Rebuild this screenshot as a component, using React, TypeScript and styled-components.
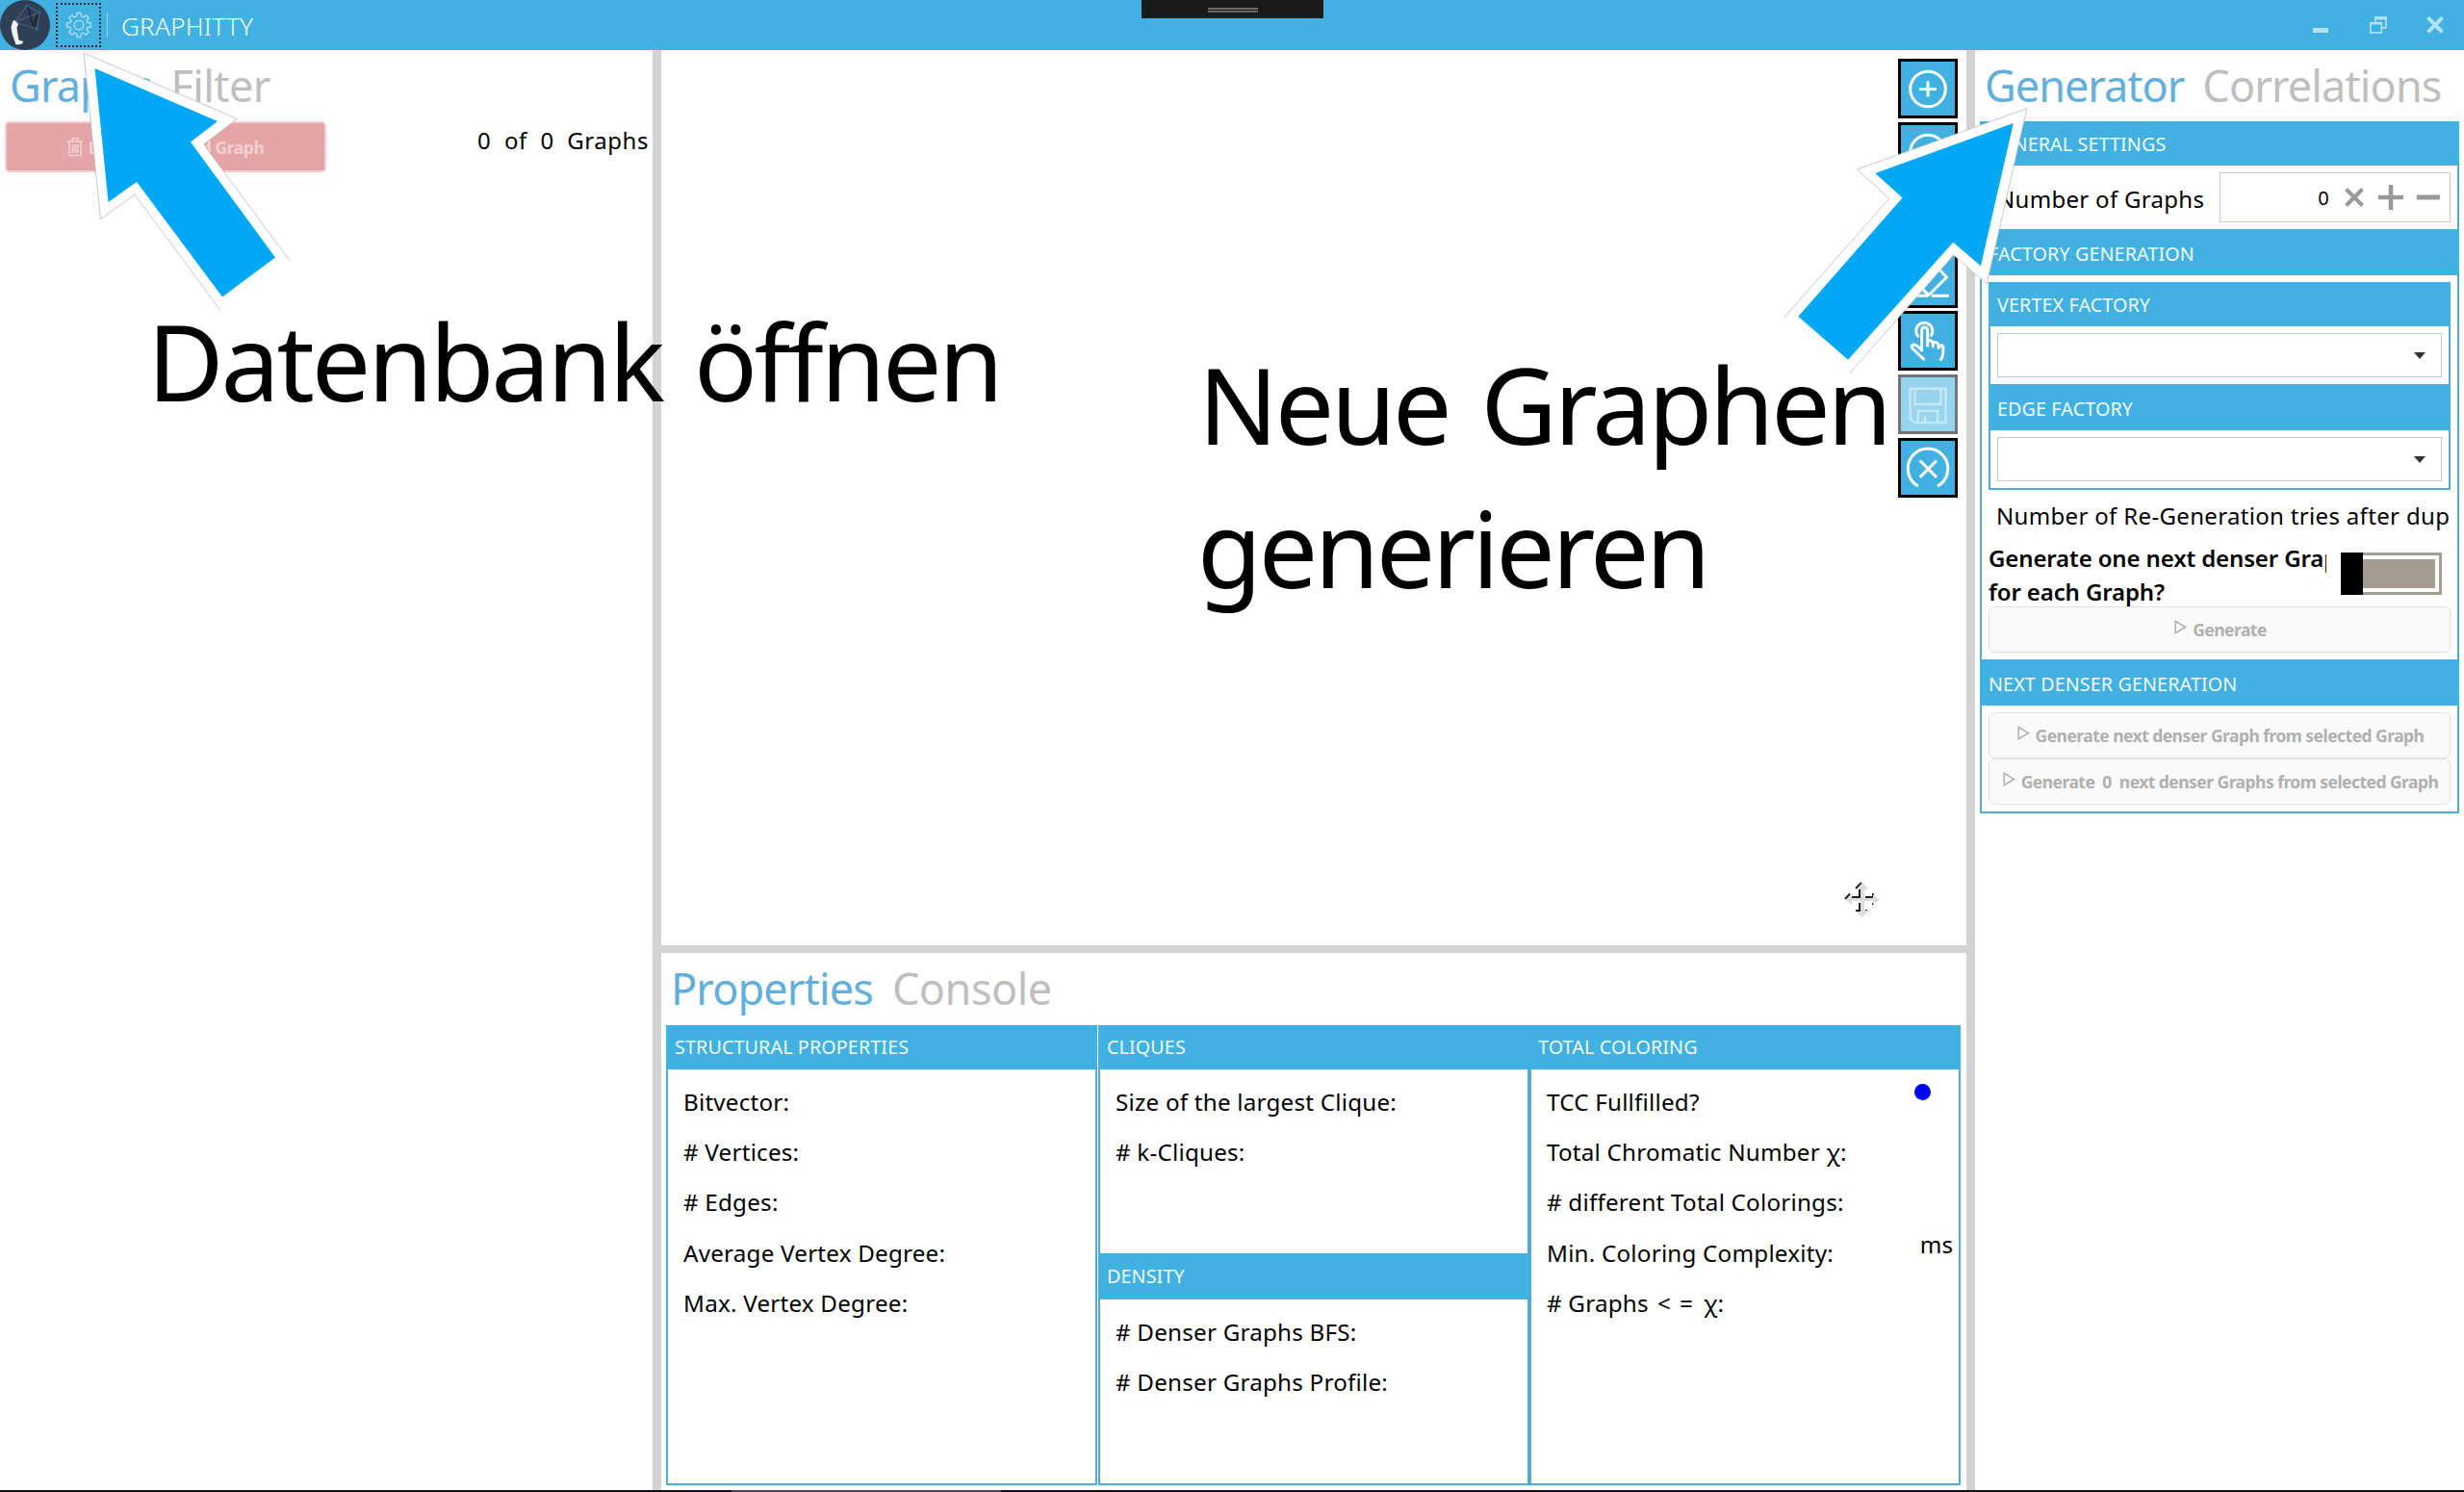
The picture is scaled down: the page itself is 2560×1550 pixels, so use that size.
import React from "react";
import styled, { createGlobalStyle } from "styled-components";

const BLUE = "#41b1e1";
const LINE = "#52abd0";

const Global = createGlobalStyle`
  * { box-sizing: border-box; }
  body {
    margin: 0;
    background: #fff;
    color: #000;
    font-family: "Noto Sans", "Open Sans", sans-serif;
  }
`;

const Window = styled.div`
  position: relative;
  width: 2560px;
  height: 1550px;
  display: flex;
  flex-direction: column;
  overflow: hidden;
  background: #fff;
`;

/* ---------- title bar ---------- */

const TitleBar = styled.header`
  height: 52px;
  flex: none;
  display: flex;
  align-items: center;
  background: ${BLUE};
  padding-right: 21px;
`;

const SettingsButton = styled.div`
  width: 47px;
  height: 46px;
  margin-left: 6px;
  border: 2px dotted #0d2a38;
  display: flex;
  align-items: center;
  justify-content: center;
`;

const Divider = styled.div`
  width: 1px;
  height: 26px;
  margin-left: 6px;
  background: #8fd2ee;
`;

const AppName = styled.div`
  flex: 1;
  margin-left: 14px;
  font-size: 26px;
  line-height: 52px;
  padding-top: 1px;
  font-weight: 300;
  letter-spacing: 0.3px;
  color: #f4fbfe;
`;

const WindowButtons = styled.div`
  display: flex;
  gap: 41px;
`;

const Notch = styled.div`
  position: absolute;
  left: 1186px;
  top: 0;
  width: 189px;
  height: 19px;
  background: #1a1a1a;
  display: flex;
  flex-direction: column;
  align-items: center;
  gap: 1px;
  padding-top: 8px;
`;

const NotchBar = styled.div`
  width: 52px;
  height: 2px;
  background: #6a6a6a;
`;

/* ---------- main layout ---------- */

const Body = styled.main`
  flex: 1;
  min-height: 0;
  display: grid;
  grid-template-columns: 678px 9px 1356px 9px 508px;
`;

const Splitter = styled.div`
  background: #d3d3d3;
`;

const Column = styled.section`
  min-width: 0;
  display: flex;
  flex-direction: column;
`;

const BottomEdge = styled.div`
  height: 2px;
  flex: none;
  background: linear-gradient(90deg, #101014 760px, #4a4a4c 760px, #4a4a4c 1040px, #101014 1040px);
`;

const Tabs = styled.nav<{ $indent: number; $gap?: number }>`
  display: flex;
  gap: ${(p) => p.$gap ?? 19}px;
  height: 74px;
  flex: none;
  padding-left: ${(p) => p.$indent}px;
`;

const Tab = styled.span<{ $active?: boolean; $ls?: number }>`
  font-size: 45px;
  line-height: 73px;
  letter-spacing: ${(p) => p.$ls ?? -0.87}px;
  white-space: nowrap;
  color: ${(p) => (p.$active ? "#63afdc" : "#bfbfbf")};
`;

/* ---------- left column ---------- */

const GraphRow = styled.div`
  display: flex;
  justify-content: space-between;
  padding: 0 4px 0 5px;
`;

const DeleteButton = styled.div`
  width: 334px;
  height: 53px;
  display: flex;
  align-items: center;
  justify-content: center;
  gap: 6px;
  border: 2px solid #efcfd1;
  border-radius: 5px;
  background: #e4a5a7;
  color: #f3d0d1;
  font-size: 17.5px;
  font-weight: 700;
  letter-spacing: -0.45px;
`;

const Count = styled.span`
  font-size: 24px;
  line-height: 39px;
  letter-spacing: 0.55px;
  white-space: pre;
`;

/* ---------- group boxes ---------- */

const GroupHeader = styled.div<{ $h?: number; $drop?: number }>`
  height: ${(p) => p.$h ?? 46}px;
  flex: none;
  line-height: ${(p) => p.$h ?? 46}px;
  margin: 0 -2px;
  padding: ${(p) => p.$drop ?? 0}px 8px 0 9px;
  background: ${BLUE};
  color: #f2fbff;
  font-size: 19.7px;
  letter-spacing: 0.13px;
  white-space: nowrap;
`;

const Group = styled.div`
  display: flex;
  flex-direction: column;
  border: 2px solid ${LINE};
  border-top: 0;
  min-width: 0;
`;

const GroupBody = styled.div`
  padding: 7px;
`;

/* ---------- centre column ---------- */

const Canvas = styled.div`
  position: relative;
  height: 930px;
  flex: none;
  display: flex;
  justify-content: flex-end;
  padding: 9px 9px 0 0;
`;

const ToolStack = styled.div`
  display: flex;
  flex-direction: column;
  gap: 3.6px;
`;

const Tool = styled.div<{ $disabled?: boolean }>`
  width: 62px;
  height: 62px;
  border: 3px solid #000;
  background: ${BLUE};
  opacity: ${(p) => (p.$disabled ? 0.54 : 1)};

  svg {
    display: block;
    margin: -3px;
    fill: none;
    stroke: #fff;
    stroke-width: ${(p) => (p.$disabled ? 2.4 : 3)};
    opacity: ${(p) => (p.$disabled ? 0.45 : 1)};
  }
`;

const CursorMark = styled.svg`
  position: absolute;
  left: 1227px;
  top: 862px;
`;

const HSplitter = styled(Splitter)`
  height: 8px;
  flex: none;
`;

const PropertyGrid = styled.div`
  flex: 1;
  min-height: 0;
  display: grid;
  grid-template-columns: 448px 449px 448px;
  padding: 1px 6px 5px 5px;
`;

const Stack = styled.div`
  display: flex;
  flex-direction: column;
  margin-left: 1px;
`;

const FixedGroup = styled(Group)`
  height: 237px;
  border-bottom: 0;
`;

const FillGroup = styled(Group)`
  flex: 1;
`;

const Rows = styled.div`
  padding: 8px 6px 0 16px;
`;

const Row = styled.div`
  display: flex;
  justify-content: space-between;
  height: 52.2px;
  line-height: 52.2px;
  font-size: 24.2px;
  letter-spacing: 0.22px;
  white-space: pre;
`;

const Unit = styled.span`
  margin-top: -9px;
  letter-spacing: 0;
`;

const Dot = styled.span`
  width: 17px;
  height: 17px;
  margin: 7px 23px 0 0;
  border-radius: 50%;
  background: #0000ff;
`;

/* ---------- right column ---------- */

const Generator = styled(Group)`
  margin: 0 5px;
`;

const CountField = styled.div`
  height: 66px;
  display: flex;
  justify-content: space-between;
  align-items: center;
  padding: 0 7px 0 16px;
  font-size: 24px;
  letter-spacing: 0.3px;
`;

const FieldLabel = styled.span`
  padding-top: 2px;
`;

const NumericBox = styled.div`
  width: 240px;
  height: 52px;
  border: 1.5px solid #ccc;
  display: flex;
  align-items: center;
  justify-content: flex-end;
  font-size: 20px;
  padding-right: 10px;
  gap: 14px;

  svg {
    stroke: #999;
    fill: none;
  }
`;

const NumericValue = styled.span`
  margin-right: 1px;
  padding-top: 1px;
`;

const Combo = styled.div`
  height: 46px;
  border: 1.5px solid #c6c6c6;
  display: flex;
  align-items: center;
  justify-content: flex-end;
  padding-right: 16px;
`;

const ComboArrow = styled.div`
  border: 6px solid transparent;
  border-top: 7px solid #333;
  border-bottom: 0;
`;

const ComboBody = styled.div`
  padding: 7px;
`;

const Retries = styled.div`
  height: 53px;
  line-height: 54px;
  padding-left: 8px;
  overflow: hidden;
  white-space: nowrap;
  font-size: 24px;
  letter-spacing: 0.33px;
`;

const DenserOption = styled.div`
  height: 68px;
  display: flex;
  justify-content: space-between;
  padding-right: 9px;
`;

const DenserLabel = styled.div`
  width: 351px;
  height: 72px;
  overflow: hidden;
  white-space: nowrap;
  font-size: 24px;
  font-weight: 600;
  line-height: 35px;
  letter-spacing: -0.13px;
`;

const Toggle = styled.div`
  width: 105px;
  height: 44px;
  margin-top: 12px;
  display: flex;
  border: 3px solid #a59d92;
  border-left: 0;
`;

const ToggleThumb = styled.div`
  width: 23px;
  margin: -3px 0;
  background: #000;
`;

const ToggleTrack = styled.div`
  flex: 1;
  margin: 4px 4px 4px 0;
  background: #a59d92;
`;

const ActionButton = styled.div`
  height: 48px;
  display: flex;
  align-items: center;
  justify-content: center;
  gap: 6px;
  padding-left: 2px;
  border: 1.5px solid #e1e1e1;
  border-radius: 6px;
  background: #fafafa;
  color: #b0b0b0;
  font-size: 17.5px;
  font-weight: 700;
  letter-spacing: -0.54px;
  white-space: pre;

  svg {
    margin-top: -5px;
  }
`;

/* ---------- annotations ---------- */

const Arrows = styled.svg`
  position: absolute;
  left: 0;
  top: 0;
`;

const Caption = styled.div<{ $x: number; $y: number; $ls: number; $ws?: number }>`
  position: absolute;
  left: ${(p) => p.$x}px;
  top: ${(p) => p.$y}px;
  font-size: 109px;
  line-height: 149px;
  letter-spacing: ${(p) => p.$ls}px;
  word-spacing: ${(p) => p.$ws ?? 0}px;
  white-space: nowrap;
`;

const gearPath = (() => {
  const pts: string[] = [];
  const teeth = 8;
  for (let i = 0; i < teeth; i++) {
    const c = (i * 2 * Math.PI) / teeth;
    [
      [-0.25, 9.4],
      [-0.17, 12.6],
      [0.17, 12.6],
      [0.25, 9.4],
    ].forEach(([d, r]) => {
      pts.push(`${(14 + r * Math.sin(c + d)).toFixed(2)} ${(14 - r * Math.cos(c + d)).toFixed(2)}`);
    });
  }
  return "M" + pts.join("L") + "Z";
})();

const Logo = () => (
  <svg width="52" height="52" viewBox="0 0 52 52">
    <circle cx="26" cy="26" r="26" fill="#2d4056" />
    <path d="M15 23L28 6L41 13L15 23L38 30L41 13" stroke="#4d6276" strokeWidth="1.1" fill="none" />
    <path d="M29 7L34 26L40 13L36 29" stroke="#1b2735" strokeWidth="1.4" fill="none" />
    <circle cx="38" cy="30" r="2.2" fill="#35618a" />
    <circle cx="41" cy="13" r="1.8" fill="#35618a" />
    <circle cx="28" cy="6" r="1.6" fill="#35618a" />
    <path
      d="M13.5 21.5Q16 20.5 17.5 23.5L19 25L17.5 29L18.5 36L19.5 41.5L24 43Q24.5 45 22 46L16.5 46.5L15 42L12.5 35L11.5 28Z"
      fill="#f1f1ef"
    />
  </svg>
);

const Gear = () => (
  <svg width="28" height="28" viewBox="0 0 28 28" fill="none" stroke="#a6dcf2" strokeWidth="1.5" strokeLinejoin="round">
    <path d={gearPath} />
    <circle cx="14" cy="14" r="4.8" />
  </svg>
);

const Play = () => (
  <svg width="13" height="15" viewBox="0 0 13 15" fill="none" stroke="#b0b0b0" strokeWidth="1.5">
    <path d="M1.2 1.3V13.7L11.6 7.5Z" />
  </svg>
);

const Trash = () => (
  <svg width="16" height="20" viewBox="0 0 16 20" fill="none" stroke="#f3d0d1" strokeWidth="1.6">
    <path d="M0 4H16M5 4V1H11V4M2 4V18.5H14V4" />
    <path d="M5.5 7V16M8 7V16M10.5 7V16" />
  </svg>
);

const App = () => (
  <Window>
    <Global />
    <TitleBar>
      <Logo />
      <SettingsButton>
        <Gear />
      </SettingsButton>
      <Divider />
      <AppName>GRAPHITTY</AppName>
      <WindowButtons>
        <svg width="18" height="20" viewBox="0 0 18 20">
          <rect x="0" y="13" width="16" height="5" fill="#b3e2f4" />
        </svg>
        <svg width="18" height="20" viewBox="0 0 18 20" fill="none" stroke="#b3e2f4">
          <path d="M6 7V2H17V13H13" strokeWidth="1.6" />
          <path d="M5.2 3H17.8" strokeWidth="3" />
          <rect x="0.8" y="8" width="11.5" height="10" strokeWidth="1.6" />
          <path d="M0 8.2H13" strokeWidth="2.6" />
        </svg>
        <svg width="18" height="20" viewBox="0 0 18 20" stroke="#b3e2f4" strokeWidth="4">
          <path d="M1.5 2.3L16.5 17.3M16.5 2.3L1.5 17.3" />
        </svg>
      </WindowButtons>
    </TitleBar>
    <Notch>
      <NotchBar />
      <NotchBar />
    </Notch>

    <Body>
      <Column>
        <Tabs $indent={10} $gap={20}>
          <Tab $active>Graphs</Tab>
          <Tab $ls={-0.6}>Filter</Tab>
        </Tabs>
        <GraphRow>
          <DeleteButton>
            <Trash />
            Delete selected Graph
          </DeleteButton>
          <Count>{"0  of  0  Graphs"}</Count>
        </GraphRow>
      </Column>

      <Splitter />

      <Column>
        <Canvas>
          <ToolStack>
            <Tool>
              <svg width="62" height="62">
                <circle cx="31" cy="31.5" r="18.3" />
                <path d="M22 31.5H40M31 23.5V39.5" />
              </svg>
            </Tool>
            <Tool>
              <svg width="62" height="62">
                <circle cx="31" cy="31.5" r="18.3" />
                <path d="M22 31.5H40" />
              </svg>
            </Tool>
            <Tool>
              <svg width="62" height="62">
                <circle cx="31" cy="31.5" r="18.3" />
              </svg>
            </Tool>
            <Tool>
              <svg width="62" height="62">
                <path d="M38 17L50.5 30L32 48.5L19 36Z" />
                <path d="M12 49.3H31M35 49.3H53M25 42L32 49" />
              </svg>
            </Tool>
            <Tool>
              <svg width="62" height="62" strokeLinejoin="round">
                <path d="M21.5 27.2A8.6 8.6 0 1 1 33.6 26.6" strokeWidth="3" />
                <path d="M27.5 51L15.5 39.5Q12.5 35.5 16 35Q19.5 35 24.6 41V20.5Q24.8 17 27.6 17Q30.4 17 30.6 20.5V36V31.5Q34.8 29.5 36.3 33.5V37V33.5Q40.5 31 42 35.5V38.5Q45.5 33.5 46.8 37.5V44Q46.6 48.5 43.5 51.5" />
              </svg>
            </Tool>
            <Tool $disabled>
              <svg width="62" height="62">
                <path d="M12.7 14.7H49.5V50H17L12.7 45.7Z" />
                <path d="M17.5 14.7V31H44.5V14.7M20.8 50V38H41.2V50M28 50V43" />
              </svg>
            </Tool>
            <Tool>
              <svg width="62" height="62">
                <path d="M21 50A20.8 20.8 0 1 1 41 50" />
                <path d="M22.8 23.5L40 40.9M40 23.5L22.8 40.9" />
              </svg>
            </Tool>
          </ToolStack>
          <CursorMark width="42" height="42" viewBox="0 0 42 42">
            <path d="M14 9L20 3M3 20L8 14.5M10 18H18V10M24 18H32V14M18 24V32H14M24 32H26M32 24V26" stroke="#222" strokeWidth="2" fill="none" />
            <path
              d="M21 3L27 10H23V19H32V15L39 21L32 26V22H23V32H27L21 39L14 33H19V22H10V26L3 21L10 16V19H19V10H15Z"
              fill="#dcdcdc"
            />
          </CursorMark>
        </Canvas>
        <HSplitter />
        <Tabs $indent={10} $gap={20}>
          <Tab $active>Properties</Tab>
          <Tab $ls={-0.48}>Console</Tab>
        </Tabs>
        <PropertyGrid>
          <Group>
            <GroupHeader>STRUCTURAL PROPERTIES</GroupHeader>
            <Rows>
              <Row>Bitvector:</Row>
              <Row># Vertices:</Row>
              <Row># Edges:</Row>
              <Row>Average Vertex Degree:</Row>
              <Row>Max. Vertex Degree:</Row>
            </Rows>
          </Group>
          <Stack>
            <FixedGroup>
              <GroupHeader>CLIQUES</GroupHeader>
              <Rows>
                <Row>Size of the largest Clique:</Row>
                <Row># k-Cliques:</Row>
              </Rows>
            </FixedGroup>
            <FillGroup>
              <GroupHeader $h={48}>DENSITY</GroupHeader>
              <Rows>
                <Row># Denser Graphs BFS:</Row>
                <Row># Denser Graphs Profile:</Row>
              </Rows>
            </FillGroup>
          </Stack>
          <Group>
            <GroupHeader>TOTAL COLORING</GroupHeader>
            <Rows>
              <Row>
                TCC Fullfilled?
                <Dot />
              </Row>
              <Row>Total Chromatic Number χ:</Row>
              <Row># different Total Colorings:</Row>
              <Row>
                Min. Coloring Complexity:
                <Unit>ms</Unit>
              </Row>
              <Row>{"# Graphs \u200a<\u200a =\u2009 χ:"}</Row>
            </Rows>
          </Group>
        </PropertyGrid>
      </Column>

      <Splitter />

      <Column>
        <Tabs $indent={10}>
          <Tab $active $ls={-1}>Generator</Tab>
          <Tab>Correlations</Tab>
        </Tabs>
        <Generator>
          <GroupHeader $drop={1}>GENERAL SETTINGS</GroupHeader>
          <CountField>
            <FieldLabel>Number of Graphs</FieldLabel>
            <NumericBox>
              <NumericValue>0</NumericValue>
              <svg width="22" height="22" viewBox="0 0 22 22" strokeWidth="4">
                <path d="M2.5 2.5L19.5 19.5M19.5 2.5L2.5 19.5" />
              </svg>
              <svg width="26" height="26" viewBox="0 0 26 26" strokeWidth="4.5">
                <path d="M0 13H26M13 0V26" />
              </svg>
              <svg width="24" height="26" viewBox="0 0 24 26" strokeWidth="5">
                <path d="M0 13H24" />
              </svg>
            </NumericBox>
          </CountField>
          <GroupHeader $h={48} $drop={2}>FACTORY GENERATION</GroupHeader>
          <GroupBody>
            <Group>
              <GroupHeader $drop={1}>VERTEX FACTORY</GroupHeader>
              <ComboBody>
                <Combo>
                  <ComboArrow />
                </Combo>
              </ComboBody>
              <GroupHeader $h={48} $drop={2}>EDGE FACTORY</GroupHeader>
              <ComboBody>
                <Combo>
                  <ComboArrow />
                </Combo>
              </ComboBody>
            </Group>
            <Retries>Number of Re-Generation tries after dup</Retries>
            <DenserOption>
              <DenserLabel>
                Generate one next denser Graph
                <br />
                for each Graph?
              </DenserLabel>
              <Toggle>
                <ToggleThumb />
                <ToggleTrack />
              </Toggle>
            </DenserOption>
            <ActionButton>
              <Play />
              Generate
            </ActionButton>
          </GroupBody>
          <GroupHeader $h={48} $drop={2}>NEXT DENSER GENERATION</GroupHeader>
          <GroupBody>
            <ActionButton>
              <Play />
              Generate next denser Graph from selected Graph
            </ActionButton>
            <ActionButton>
              <Play />
              {"Generate  0  next denser Graphs from selected Graph"}
            </ActionButton>
          </GroupBody>
        </Generator>
      </Column>
    </Body>
    <BottomEdge />

    <Arrows width="2560" height="560" viewBox="0 0 2560 560">
      <path d="M87 55L246.5 123.5L211.5 150L300.5 270L229 322.5L140 202L104.5 228Z" fill="#fff" />
      <path d="M300.5 270L211.5 150L246.5 123.5L87 55L104.5 228L140 202L229 322.5" fill="none" stroke="#b9b9b9" strokeWidth="0.8" />
      <path d="M98.5 71L226 126L198 147.5L286 267.5L231 308.5L142 189L112.5 210Z" fill="#02a8f4" />
      <path d="M2105.9 112.7L1929.4 176L1962.9 206.3L1853.3 330.3L1921.2 388.3L2029.8 265L2064.2 295Z" fill="#fff" />
      <path
        d="M1853.3 330.3L1962.9 206.3L1929.4 176L2105.9 112.7L2064.2 295L2029.8 265L1921.2 388.3"
        fill="none"
        stroke="#b9b9b9"
        strokeWidth="0.8"
      />
      <path d="M2091.8 128L1948.3 180L1976.5 205.5L1868.3 328.7L1920 373.7L2029.3 251.7L2057.9 276.3Z" fill="#02a8f4" />
    </Arrows>
    <Caption $x={153} $y={300} $ls={-3.1} $ws={8}>
      Datenbank öffnen
    </Caption>
    <Caption $x={1245} $y={345} $ls={-3.2} $ws={8}>
      Neue Graphen
    </Caption>
    <Caption $x={1244} $y={494} $ls={-3.36}>
      generieren
    </Caption>
  </Window>
);

export default App;
